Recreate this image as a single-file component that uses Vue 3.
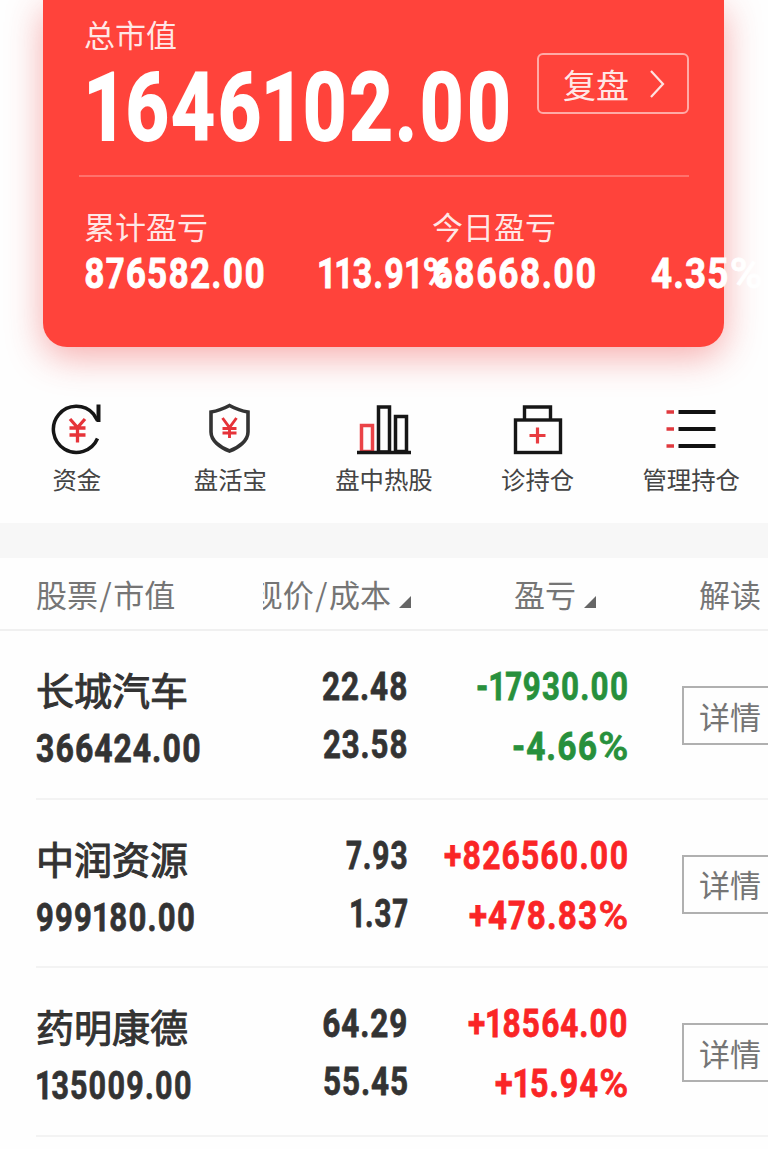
<template>
  <div class="page">
    <section class="card">
      <div class="total">
        <div>
          <div class="label">总市值</div>
          <div class="total-value"><span v-fit="428" class="num">1646102.00</span></div>
        </div>
        <button class="review">
          复盘
          <svg width="16" height="30" viewBox="0 0 16 30">
            <path d="M2 2 L14 15 L2 28" fill="none" stroke="#fff" stroke-opacity=".85" stroke-width="2.2" />
          </svg>
        </button>
      </div>
      <div class="profits">
        <div v-for="p in profits" :key="p.label" class="profit">
          <div class="label">{{ p.label }}</div>
          <div class="profit-values">
            <span class="slot" :style="{ width: p.slot + 'px' }"><span v-fit="p.amountWidth" class="num">{{ p.amount }}</span></span>
            <span v-fit="p.rateWidth" class="num">{{ p.rate }}<i class="percent">%</i></span>
          </div>
        </div>
      </div>
    </section>

    <nav class="shortcuts">
      <a class="shortcut">
        <svg width="54" height="54" viewBox="0 0 54 54" fill="none">
          <path d="M47.5 36.500 A23 23 0 1 1 43.500 12 L47.500 18.500" stroke="#161616" stroke-width="3.500" />
          <path d="M48.500 2.500 V20" stroke="#161616" stroke-width="4" />
          <path d="M20 17 L27.500 25.500 L35 17 M19.500 26 H35.500 M19.500 33 H35.500 M27.500 25 V40.500" stroke="#e63339" stroke-width="3.300" />
        </svg>
        <span>资金</span>
      </a>
      <a class="shortcut">
        <svg width="54" height="54" viewBox="0 0 54 54" fill="none">
          <path d="M26.500 3.500 C32 6.500 38 9 45 10 V30 C45 38.500 36 45.500 26.500 49 C17 45.500 8 38.500 8 30 V10 C15 9 21 6.500 26.500 3.500 Z" stroke="#333" stroke-width="3.600" />
          <path d="M19.500 16 L26.500 25.500 L33.500 16 M19.500 26.500 H33.500 M19.500 31 H33.500 M26.500 25 V36" stroke="#e63339" stroke-width="2.900" />
        </svg>
        <span>盘活宝</span>
      </a>
      <a class="shortcut">
        <svg width="54" height="54" viewBox="0 0 54 54" fill="none">
          <rect x="4.500" y="23.500" width="11" height="26" stroke="#ea4347" stroke-width="3.500" />
          <rect x="21.500" y="5" width="11" height="45" stroke="#161616" stroke-width="3.500" />
          <rect x="38.500" y="14.500" width="11" height="35" stroke="#161616" stroke-width="3.500" />
          <path d="M0 50.500 H54" stroke="#161616" stroke-width="3.500" />
        </svg>
        <span>盘中热股</span>
      </a>
      <a class="shortcut">
        <svg width="54" height="54" viewBox="0 0 54 54" fill="none">
          <path d="M13.500 17 V5 H39.500 V17" stroke="#161616" stroke-width="3.400" />
          <rect x="4.500" y="18" width="45" height="32.500" stroke="#161616" stroke-width="3.400" />
          <path d="M18.500 33.500 H34.500 M26.500 25.500 V41.500" stroke="#e83c41" stroke-width="3.200" />
        </svg>
        <span>诊持仓</span>
      </a>
      <a class="shortcut">
        <svg width="54" height="54" viewBox="0 0 54 54" fill="none">
          <path d="M2.500 10 H10 M2.500 27 H10 M2.500 44 H10" stroke="#e0393e" stroke-width="3.600" />
          <path d="M14.500 10 H51.500 M14.500 27 H51.500 M14.500 44 H51.500" stroke="#111" stroke-width="3.800" />
        </svg>
        <span>管理持仓</span>
      </a>
    </nav>

    <section class="holdings">
      <header class="head">
        <span>股票<i class="slash">/</i>市值</span>
        <span class="sortable">现价<i class="slash">/</i>成本<i class="triangle"></i></span>
        <span class="sortable">盈亏<i class="triangle"></i></span>
        <span class="head-last">解读</span>
      </header>
      <div v-for="s in stocks" :key="s.name" class="row">
        <div class="col-name">
          <div class="name">{{ s.name }}</div>
          <div class="line"><span v-fit="s.value[1]" class="num">{{ s.value[0] }}</span></div>
        </div>
        <div class="col-price">
          <div class="line"><span v-fit="s.price[1]" class="num right">{{ s.price[0] }}</span></div>
          <div class="line"><span v-fit="s.cost[1]" class="num right">{{ s.cost[0] }}</span></div>
        </div>
        <div class="col-profit" :class="s.trend">
          <div class="line"><span v-fit="s.profit[1]" class="num right">{{ s.profit[0] }}</span></div>
          <div class="line"><span v-fit="s.rate[1]" class="num right">{{ s.rate[0] }}<i class="percent">%</i></span></div>
        </div>
        <button class="detail">详情</button>
      </div>
    </section>
  </div>
</template>

<script setup>
// condense a number horizontally to the given width
const vFit = {
  mounted(el, { value }) {
    el.style.transform = `scaleX(${value / el.offsetWidth})`
  }
}

const profits = [
  { label: '累计盈亏', amount: '876582.00', amountWidth: 182, slot: 234, rate: '113.91', rateWidth: 136 },
  { label: '今日盈亏', amount: '68668.00', amountWidth: 165, slot: 219, rate: '4.35', rateWidth: 112 }
]

// [text, width]
const stocks = [
  {
    name: '长城汽车',
    value: ['366424.00', 166],
    price: ['22.48', 87],
    cost: ['23.58', 86],
    profit: ['-17930.00', 153],
    rate: ['-4.66', 117],
    trend: 'down'
  },
  {
    name: '中润资源',
    value: ['999180.00', 160],
    price: ['7.93', 63],
    cost: ['1.37', 59],
    profit: ['+826560.00', 185],
    rate: ['+478.83', 160],
    trend: 'up'
  },
  {
    name: '药明康德',
    value: ['135009.00', 157],
    price: ['64.29', 87],
    cost: ['55.45', 86],
    profit: ['+18564.00', 161],
    rate: ['+15.94', 134],
    trend: 'up'
  }
]
</script>

<style>
body {
  margin: 0;
  background: #fefefe;
}
</style>

<style scoped>
.page {
  width: 768px;
  height: 1149px;
  overflow: hidden;
  background: #fefefe;
  font-family: "Noto Sans CJK SC", sans-serif;
  color: #333;
}

button {
  font-family: inherit;
  background: none;
  padding: 0;
}

.num {
  display: block;
  flex: none;
  width: max-content;
  font-family: Roboto, "Liberation Sans", sans-serif;
  font-weight: 700;
  font-variant-numeric: proportional-nums;
  letter-spacing: 0.03em;
  -webkit-text-stroke: 0.02em currentColor;
  white-space: nowrap;
  transform-origin: left center;
}

.num.right {
  margin-right: -1px;
  transform-origin: right center;
}

.percent {
  display: inline-block;
  margin-right: 0.16em;
  font-style: normal;
  font-weight: 500;
  transform: scaleX(1.22);
  transform-origin: left center;
}

.card {
  box-sizing: border-box;
  width: 681px;
  height: 347px;
  margin-left: 43px;
  padding: 14px 35px 0 36px;
  background: #ff433b;
  border-radius: 0 0 24px 24px;
  box-shadow: 0 10px 36px rgba(235, 50, 50, 0.4);
  color: #fff;
}

.label {
  font-size: 31px;
  line-height: 40px;
  padding-left: 5px;
  color: rgba(255, 255, 255, 0.88);
  white-space: nowrap;
}

.total {
  display: flex;
  justify-content: space-between;
  height: 161px;
  border-bottom: 2px solid rgba(255, 255, 255, 0.25);
}

.total-value {
  font-size: 94px;
  line-height: 108px;
  padding-left: 7px;
  width: 430px;
}

.review {
  box-sizing: border-box;
  display: flex;
  flex: none;
  align-items: center;
  gap: 20px;
  width: 152px;
  height: 61px;
  margin-top: 39px;
  padding-left: 24px;
  border: 2px solid rgba(255, 255, 255, 0.55);
  border-radius: 6px;
  font-size: 33px;
  line-height: 56px;
  color: rgba(255, 255, 255, 0.9);
}

.profits {
  display: flex;
  padding-top: 29px;
}

.profit {
  width: 348px;
  flex: none;
}

.profit-values {
  display: flex;
  padding-left: 5px;
  font-size: 42px;
  line-height: 56px;
}

.slot {
  flex: none;
}

.shortcuts {
  display: flex;
  height: 121px;
  padding-top: 55px;
}

.shortcut {
  display: flex;
  flex: 1;
  flex-direction: column;
  align-items: center;
  font-size: 24.4px;
  line-height: 45px;
  color: #444;
}

.shortcut svg {
  flex: none;
}

.holdings {
  border-top: 35px solid #f7f7f7;
}

.head {
  display: grid;
  grid-template-columns: 227px 148px 185px 1fr;
  height: 71px;
  padding-left: 36px;
  border-bottom: 2px solid #f0f0f0;
  font-size: 31px;
  line-height: 72px;
  color: #757575;
  white-space: nowrap;
}

.slash {
  font-style: normal;
  margin: 0 1.5px;
}

.sortable {
  display: flex;
  justify-content: flex-end;
  overflow: hidden;
}

.triangle {
  flex: none;
  width: 12px;
  height: 12px;
  margin: 38px 0 0 8px;
  background: #666;
  clip-path: polygon(100% 0, 100% 100%, 0 100%);
}

.head-last {
  padding-left: 103px;
}

.row {
  box-sizing: border-box;
  display: grid;
  grid-template-columns: 226px 146px 220px 1fr;
  height: 168.5px;
  margin-left: 36px;
  padding-top: 26px;
  border-bottom: 2px solid #f3f3f3;
  font-size: 38px;
}

.name {
  height: 60px;
  line-height: 63px;
  -webkit-text-stroke: 1px #333;
}

.line {
  display: flex;
  height: 58px;
  line-height: 60px;
}

.col-name .line {
  padding-top: 2px;
}

.col-price .line,
.col-profit .line {
  justify-content: flex-end;
}

.col-profit .line {
  height: 60px;
}

.down {
  color: #27903c;
}

.up {
  color: #fa2526;
}

.detail {
  width: 100px;
  height: 59px;
  margin: 29px 0 0 54px;
  border: 2px solid #b0b0b0;
  font-size: 31px;
  line-height: 54px;
  color: #757575;
  text-align: left;
  padding-left: 15px;
  box-sizing: border-box;
}
</style>
